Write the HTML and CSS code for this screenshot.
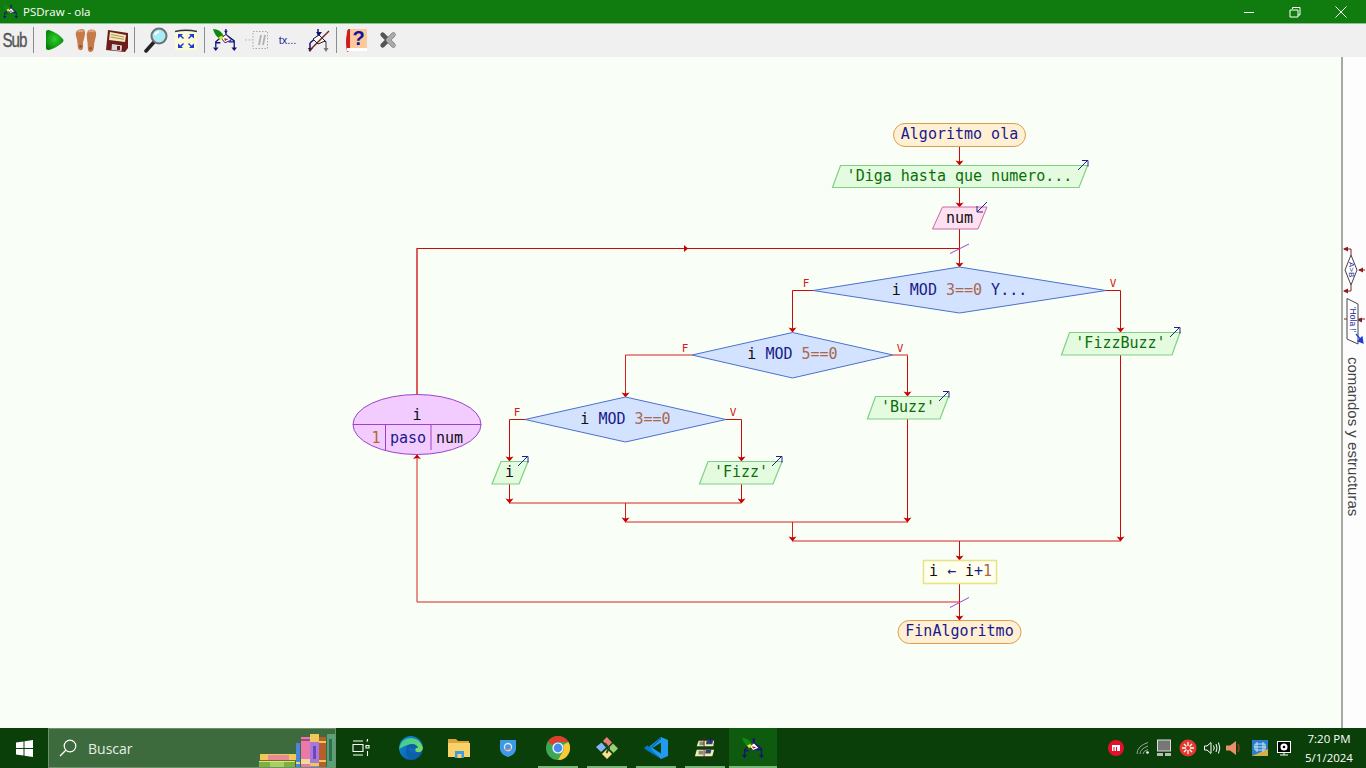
FILE: index.html
```html
<!DOCTYPE html>
<html lang="es">
<head>
<meta charset="utf-8">
<title>PSDraw - ola</title>
<link rel="stylesheet" href="styles.css">
</head>
<body>
<svg class="defs" width="0" height="0" aria-hidden="true">
  <defs>
    <path id="ah" d="M-4 -4.500 L0 -3.500 L4 -4.500 L0 0.500Z"/>
    <radialGradient id="playg" cx="0.5" cy="0.45" r="0.65"><stop offset="0" stop-color="#2fd02f"/><stop offset="1" stop-color="#007a00"/></radialGradient>
    <linearGradient id="edge1" x1="0" y1="0" x2="1" y2="1"><stop offset="0" stop-color="#0d8fd8"/><stop offset="1" stop-color="#0b4f9e"/></linearGradient>
    <linearGradient id="edge2" x1="0" y1="0" x2="1" y2="1"><stop offset="0" stop-color="#36c8a0"/><stop offset="1" stop-color="#7fdc5c"/></linearGradient>
    <symbol id="psd" viewBox="0 0 26 26">
      <path d="M14 1 V7 M3 21 V15 L10 9 M14 7 L23 14 V22 M3 16 H8 M17 15 H23" stroke="#12127c" stroke-width="1.400" fill="none"/>
      <path d="M9 11 L14 7 L20 13 L13 16Z" fill="#fff" stroke="#12127c"/>
      <path d="M12 11 L17 12 L13 14Z" fill="#c41e1e"/>
      <path d="M0 1 Q8 1 12 9 L8 12 Q2 9 0 1Z" fill="#0c8a14"/>
      <path d="M6 10 L10 8 L11 12 L8 13Z" fill="#f2e01c"/>
      <path d="M0 21 L3 25 L6 21Z M20 21 L23 25 L26 21Z M12 3 L14 6 L16 3Z" fill="#12127c"/>
    </symbol>
  </defs>
</svg>

<header class="titlebar">
  <div class="title-left">
    <svg class="title-ico" width="15" height="15"><use href="#psd"/></svg>
    <span class="title-text">PSDraw - ola</span>
  </div>
  <div class="win-ctrls">
    <button class="win-btn"><svg width="12" height="12"><path d="M1 6.500H11" stroke="#fff"/></svg></button>
    <button class="win-btn"><svg width="12" height="12"><path d="M3.500 2.500V1H11V8.500H9M1 3.500H9V10.500H1Z" fill="none" stroke="#fff" transform="translate(0 .5)"/></svg></button>
    <button class="win-btn"><svg width="12" height="12"><path d="M.5 .5L11.500 11.500M11.500 .5L.5 11.500" stroke="#fff"/></svg></button>
  </div>
</header>

<nav class="toolbar">
  <div class="tool tool-sub"><span class="sub-text">Sub</span></div>
  <i class="sep"></i>
  <div class="tool"><svg class="ic-play" width="20" height="22" viewBox="2 1 20 22"><path d="M4 4 Q4 1.500 7 2 Q16 5 21 11 Q22 12.500 21 14 Q16 19 7 22 Q4 22.500 4 20Z" fill="url(#playg)"/></svg></div>
  <div class="tool"><svg width="24" height="26" viewBox="0 0 26 28"><path d="M3 4 Q8 1 11 3 Q13 6 11 12 Q9 17 10 21 Q10 25 7 25 Q4 25 4 20 Q4 14 2 9 Q1.500 6 3 4Z" fill="#c67a4a"/><path d="M15 4 Q19 1 23 4 Q25 7 23 13 Q21.500 18 21.500 22 Q21 27 17.500 27 Q15 27 15 23 Q15 17 14 12 Q13 7 15 4Z" fill="#c67a4a"/><circle cx="7" cy="21" r="1.500" fill="#96502a"/><circle cx="18" cy="23" r="1.500" fill="#96502a"/><path d="M4 5 Q8 3 10 5" stroke="#dfa67c" stroke-width="2" fill="none"/><path d="M16 5 Q19 3 22 5" stroke="#dfa67c" stroke-width="2" fill="none"/></svg></div>
  <div class="tool"><svg width="24" height="24" viewBox="0 0 24 24"><path d="M3 2 L23 5 V20 L20 24 L1 22Z" fill="#6e1c1c"/><path d="M5 4 L21 7 L20 14 L4 12Z" fill="#f4e9b8"/><path d="M6 6.500 L19 9 M5.500 9 L19 11.300" stroke="#a89860"/><path d="M7 16 L17 17.500 L16.500 23 L6.500 22Z" fill="#d8d8d8"/><path d="M12 18 H15 V22 H12Z" fill="#6e1c1c"/></svg></div>
  <i class="sep"></i>
  <div class="tool"><svg width="24" height="26" viewBox="0 0 24 26"><path d="M10 15 L2 24" stroke="#222" stroke-width="3.500" stroke-linecap="round"/><circle cx="15" cy="9" r="7.500" fill="#a8ecf6" stroke="#707070" stroke-width="2"/><path d="M11 8 Q12 5 15 5" stroke="#fff" stroke-width="2" fill="none"/></svg></div>
  <div class="tool"><svg class="ic-left" width="22" height="22" viewBox="0 0 22 22"><rect y="3" width="22" height="18" fill="#fbfbd8"/><path d="M0 2.500 Q11 0 22 2.500" stroke="#333" stroke-width="1.500" fill="none"/><path d="M3 5 H8 L6.500 6.500 L9 9 L8 10 L5.500 7.500 L3 9.500Z M19 5 H14 L15.500 6.500 L13 9 L14 10 L16.500 7.500 L19 9.500Z M3 19 H8 L6.500 17.500 L9 15 L8 14 L5.500 16.500 L3 14.500Z M19 19 H14 L15.500 17.500 L13 15 L14 14 L16.500 16.500 L19 14.500Z" fill="#1c3cd4"/></svg></div>
  <i class="sep"></i>
  <div class="tool"><svg class="ic-left" width="24" height="24"><use href="#psd"/></svg></div>
  <div class="tool"><svg width="24" height="20" viewBox="0 0 24 20"><path d="M8 1.500 H22.500 V18.500 H8Z" fill="none" stroke="#aaa" stroke-dasharray="1.500 1.500"/><path d="M0 10 H8" stroke="#bbb" stroke-dasharray="2 1.500"/><path d="M14 15 L16 5 M18 15 L20 5" stroke="#b0b0b0" stroke-width="1.800"/></svg></div>
  <div class="tool"><span class="tx">tx...</span></div>
  <div class="tool"><svg width="24" height="24" viewBox="0 0 24 24"><path d="M11 1 V7 M3 15 L11 8 L19 14 M3 15 V23" stroke="#12127c" stroke-width="1.500" fill="none"/><path d="M19 14 V22" stroke="#777" stroke-width="1.500"/><path d="M6 11 L12 7 L18 13 L11 16Z" fill="#fff" stroke="#222"/><path d="M9 4 L12 8 L15 4Z M1 20 L3 24 L6 20Z" fill="#12127c"/><path d="M16.500 20 L19 24 L21.500 20Z" fill="#777"/><path d="M2 23 L22 3" stroke="#7a2020" stroke-width="1.500"/></svg></div>
  <i class="sep"></i>
  <div class="tool"><svg class="ic-left" width="22" height="24" viewBox="0 0 22 24"><path d="M3 1 H21 V20 H4 Q0 20 1 23 H3 L1 24 Q-1 14 1 5 Q1 1 3 1Z" fill="#cf1d1d"/><rect x="4" y="1" width="17" height="19" fill="#fdc99a"/><rect x="1" y="20" width="20" height="3" fill="#fff"/><text class="q" x="12.500" y="17">?</text></svg></div>
  <div class="tool"><svg class="ic-left" width="18" height="18" viewBox="0 0 20 20"><path d="M4 4 L16 16 M16 4 L4 16" stroke="#555" stroke-width="5" stroke-linecap="round"/><path d="M10 10 L16 16 M10 10 L16 4" stroke="#aaa" stroke-width="4.500" stroke-linecap="round"/></svg></div>
</nav>

<main class="workspace">
  <svg class="canvas" viewBox="0 57 1341 671" width="1341" height="671">
    <g class="ln">
      <path d="M959.500 146V165M959.500 188V207M959.500 229V267M959.500 583V620"/>
      <path d="M417 248.500H959.500"/>
      <path d="M813 290.500H792.500V332"/>
      <path d="M1106 290.500H1120.500V331"/>
      <path d="M1120.500 355V541"/>
      <path d="M741.500 419.500V461M741.500 484V503M509.500 419.500V461M509.500 484V503M525 419.500H509.500M726 419.500H741.500"/>
      <path d="M907.500 355.500V396M907.500 419V522"/>
      <path d="M959.500 541V560"/>
    </g>
    <path class="ln-thick" d="M417 395V248"/>
    <g class="ln-soft">
      <path d="M692 355H625.500V397"/>
      <path d="M893 355H908"/>
      <path d="M509 503H741M625.500 503V522"/>
      <path d="M625 522H908M792.500 522V541"/>
      <path d="M792 541H1120.500"/>
      <path d="M959.500 602H417V455"/>
    </g>
    <g class="ah">
      <use href="#ah" x="959.500" y="165"/><use href="#ah" x="959.500" y="207"/><use href="#ah" x="959.500" y="267"/>
      <use href="#ah" x="792.500" y="332"/><use href="#ah" x="1120.500" y="332"/><use href="#ah" x="625.500" y="397"/>
      <use href="#ah" x="907.500" y="396"/><use href="#ah" x="509.500" y="461"/><use href="#ah" x="741.500" y="461"/>
      <use href="#ah" x="509.500" y="503"/><use href="#ah" x="741.500" y="503"/><use href="#ah" x="625.500" y="522"/>
      <use href="#ah" x="907.500" y="522"/><use href="#ah" x="792.500" y="541"/><use href="#ah" x="1120.500" y="541"/>
      <use href="#ah" x="959.500" y="560"/><use href="#ah" x="959.500" y="620"/>
      <path d="M417 454.500 L413 459 L417 458 L421 459Z"/>
      <path d="M688 248.500 L684 245 V252Z"/>
    </g>
    <path class="slash" d="M950 253.500L969 244M950 607.500L969 597.500"/>

    <rect class="term" x="893.500" y="123.500" width="132" height="23" rx="11.500"/>
    <path class="out" d="M840.500 165.500H1087.500L1079 187.500H832.500Z"/>
    <path class="inp" d="M942.500 207H987L978 229H932.500Z"/>
    <path class="dec" d="M813 290.500L959.500 267L1106 290.500L959.500 313Z"/>
    <path class="dec" d="M692 355L792.500 332.500L893 355L792.500 378Z"/>
    <path class="dec" d="M525 419.500L625.500 397L726 419.500L625.500 442Z"/>
    <path class="out" d="M1069.500 332.500H1180L1172 355H1061.500Z"/>
    <path class="out" d="M875.500 396.500H948.500L940 419H867.500Z"/>
    <path class="out" d="M501 461.500H528L519 484H492Z"/>
    <path class="out" d="M708 461.500H782L773 484H699.500Z"/>
    <rect class="asg" x="923.500" y="560.500" width="73" height="23"/>
    <rect class="term" x="898" y="620.500" width="123" height="23" rx="11.500"/>
    <ellipse class="loop" cx="417" cy="424.500" rx="64" ry="30"/>
    <path class="loop-l" d="M353 424.500H481M385.500 424.500V450M431 424.500V450"/>

    <g class="io">
      <path d="M1078 170L1088 160M1082 160.500H1088V166.500"/>
      <path d="M987 202L977 212M977 206V212H983"/>
      <path d="M1170 337L1180 327M1174 327.500H1180V333.500"/>
      <path d="M939 401L949 391M943 391.500H949V397.500"/>
      <path d="M518 466L528 456M522 456.500H528V462.500"/>
      <path d="M772 466L782 456M776 456.500H782V462.500"/>
    </g>

    <g class="lbl">
      <text x="806" y="287">F</text><text x="1113" y="287">V</text>
      <text x="685" y="352">F</text><text x="900" y="352">V</text>
      <text x="517" y="416">F</text><text x="733" y="416">V</text>
    </g>

    <g class="fc">
      <text class="navy" x="959.500" y="139">Algoritmo ola</text>
      <text class="green" x="959.500" y="181">'Diga hasta que numero...</text>
      <text class="black" x="959.500" y="223">num</text>
      <text x="959.500" y="295"><tspan class="black">i</tspan> <tspan class="navy">MOD</tspan> <tspan class="brown">3==0</tspan> <tspan class="navy">Y...</tspan></text>
      <text x="792.500" y="359"><tspan class="black">i</tspan> <tspan class="navy">MOD</tspan> <tspan class="brown">5==0</tspan></text>
      <text x="625.500" y="424"><tspan class="black">i</tspan> <tspan class="navy">MOD</tspan> <tspan class="brown">3==0</tspan></text>
      <text class="green" x="1120.500" y="348">'FizzBuzz'</text>
      <text class="green" x="908" y="412">'Buzz'</text>
      <text class="black" x="509.500" y="477">i</text>
      <text class="green" x="741" y="477">'Fizz'</text>
      <text x="960.500" y="576"><tspan class="black">i</tspan> <tspan class="navy">←</tspan> <tspan class="black">i</tspan><tspan class="navy">+</tspan><tspan class="brown">1</tspan></text>
      <text class="navy" x="959.500" y="636">FinAlgoritmo</text>
      <text class="black" x="417" y="420">i</text>
      <text class="orange" x="376" y="443">1</text>
      <text class="navy" x="408" y="443">paso</text>
      <text class="black" x="449.500" y="443">num</text>
    </g>
  </svg>

  <aside class="side">
    <svg class="side-ico" width="23" height="100" viewBox="1343 247 23 100">
      <g class="side-ln">
        <path d="M1351 255V249H1344M1351 285V291H1344M1359 270H1365M1353 319H1365M1344 319H1349"/>
      </g>
      <path class="side-ah" d="M1343 249L1348 246.500V251.500ZM1343 291L1348 288.500V293.500ZM1358 270L1363 267.500V272.500ZM1357 320L1362 317.500V322.500Z"/>
      <path class="side-shape" d="M1351 255L1357 270L1351 285L1345 270Z"/>
      <text class="side-t1" transform="translate(1348.500 262) rotate(90)">A&gt;B</text>
      <path class="side-shape" d="M1347 298.500L1358 304V344L1347 339Z"/>
      <text class="side-t2" transform="translate(1350 307) rotate(90)">'Hola !'</text>
      <path class="side-arrow" d="M1356 334L1362 341M1363 343L1358 341L1362 337Z"/>
    </svg>
    <span class="side-label">comandos y estructuras</span>
  </aside>
</main>

<footer class="taskbar">
  <div class="start"><svg width="17" height="17" viewBox="0 0 17 17"><path d="M0 2.500L7.500 1.400V8H0ZM8.500 1.300L17 0V8H8.500ZM0 9H7.500V15.600L0 14.500ZM8.500 9H17V17L8.500 15.700Z" fill="#fff"/></svg></div>
  <div class="search">
    <svg class="search-ico" width="18" height="18" viewBox="0 0 18 18"><circle cx="11" cy="7" r="5.800" fill="none" stroke="#fff" stroke-width="1.200"/><path d="M6.800 11.200L1 17" stroke="#fff" stroke-width="1.300"/></svg>
    <span class="search-text">Buscar</span>
    <svg class="books" width="76" height="36" viewBox="0 0 76 36">
      <rect x="1" y="23" width="36" height="7" fill="#eec95a"/><rect x="9" y="24" width="21" height="5" fill="#e88a98"/><rect x="1" y="29" width="36" height="1" fill="#8a6a20"/>
      <rect x="0" y="30" width="36" height="6" fill="#7db03c"/><rect x="11" y="31" width="14" height="5" fill="#a7d060"/><rect x="0" y="30" width="36" height="1" fill="#cfe58e"/>
      <rect x="37" y="12" width="4" height="24" fill="#4a86dc"/><rect x="37" y="31" width="4" height="2" fill="#e4d67a"/>
      <rect x="42" y="6" width="9" height="30" fill="#e879a8"/><rect x="42" y="8" width="9" height="2" fill="#a04a80"/><rect x="42" y="28" width="9" height="5" fill="#f0d9a0"/>
      <rect x="51" y="3" width="9" height="33" fill="#a878e0"/><rect x="51" y="3" width="9" height="8" fill="#eec95a"/><rect x="54" y="15" width="3" height="13" fill="#6a4ab0"/><rect x="51" y="32" width="9" height="3" fill="#eec95a"/>
      <rect x="60" y="6" width="7" height="30" fill="#b5602c"/><rect x="60" y="10" width="7" height="2" fill="#eec95a"/><rect x="60" y="29" width="7" height="2" fill="#eec95a"/>
      <rect x="68" y="3" width="8" height="33" fill="#5aa078"/><rect x="70" y="8" width="3" height="22" fill="#2f7048"/>
    </svg>
  </div>

  <div class="apps">
    <div class="app app-task"><svg width="20" height="20" viewBox="0 0 20 20" fill="none" stroke="#fff" stroke-width="1.100"><path d="M2 3H12M2 17H12M2 6.500H12V13.500H2ZM15.500 3H17M16.500 1V3M15 7.500H18V10H15ZM16.500 13V18"/></svg></div>
    <div class="app"><svg width="26" height="26" viewBox="0 0 26 26"><circle cx="13" cy="13" r="12" fill="url(#edge1)"/><path d="M1 14 Q3 3 13 3 Q22 3 25 13 Q24 18 19 17 Q16 16 18 13 Q15 8 9 10 Q4 12 1 14Z" fill="url(#edge2)"/><path d="M8 15 Q8 9 14 9 Q19 9 20 13 H11 Q11 19 18 19 Q21 19 23 18 Q20 24 14 24 Q8 23 8 15Z" fill="#0c5fa8"/></svg></div>
    <div class="app app-task"><svg width="22" height="20" viewBox="0 0 22 20"><path d="M0 1H8L10 3H21V19H0Z" fill="#dca63c"/><rect y="5" width="22" height="14" fill="#fbd269"/><rect x="7" y="13" width="9" height="7" fill="#3f9ce0"/><rect x="9.500" y="16" width="4" height="4" fill="#fbd269"/></svg></div>
    <div class="app app-task"><svg width="16" height="18" viewBox="0 0 16 18"><path d="M0 1H16V10Q16 15 8 18Q0 15 0 10Z" fill="#3f9ae6"/><circle cx="8" cy="8" r="3.500" fill="none" stroke="#d8ecff" stroke-width="1.300"/><path d="M5 10Q8 12 11 9" stroke="#f08050" stroke-width="1.300" fill="none"/></svg></div>
    <div class="app app-on"><svg width="24" height="24" viewBox="0 0 24 24"><circle cx="12" cy="12" r="12" fill="#3ba757"/><path d="M12 0A12 12 0 0 1 22.400 6H12A6 6 0 0 0 6.800 9L1.600 6A12 12 0 0 1 12 0Z" fill="#e33b2e"/><path d="M22.400 6A12 12 0 0 1 12 24L17.200 15A6 6 0 0 0 17.200 9Z" fill="#fcc934"/><circle cx="12" cy="12" r="5.600" fill="#fff"/><circle cx="12" cy="12" r="4.400" fill="#4a8af4"/></svg></div>
    <div class="app app-on"><svg width="24" height="24" viewBox="0 0 24 24"><path d="M11.800 1L17 6.500L13 10.500L8 5Z" fill="#ee7d7a"/><path d="M6.500 6.500L11 11.500L6 16L1 11Z" fill="#83b4fa"/><path d="M18 7.500L23 12.500L18.500 17L13.500 12Z" fill="#9bcf70"/><path d="M12 13L17 18L12 23L7 18Z" fill="#fbe18a"/><path d="M10 7L14 12L11.500 17M14 12H14.800" stroke="#1c4a2c" stroke-width="1.800" fill="none"/></svg></div>
    <div class="app app-on"><svg width="24" height="24" viewBox="0 0 24 24"><path d="M17 1L24 4V20L17 23L5 13V11Z" fill="#1f9cf0"/><path d="M17 6.500V17.500L8.500 12Z" fill="#0a3f0a"/><path d="M17 1L3.500 14.500L0 12L3 9.500L7 12.500L17 3Z" fill="#0065a9"/><path d="M0 12L3.500 9.500L17 23L14 21L3 14.500Z" fill="#007acc"/></svg></div>
    <div class="app app-on"><svg width="24" height="22" viewBox="0 0 24 24"><path d="M5 4H22L21 10H3Z" fill="#eef0b0"/><path d="M3 14H22L20 21H1Z" fill="#eef0b0"/><path d="M6 5H11V9H6ZM5 15H10V19H5Z" fill="#888"/><path d="M14 3H21L20 8H13ZM13 14H19L18 18H12Z" fill="#333e7a"/><path d="M11 0V24" stroke="#6e2020"/><path d="M18 0V6" stroke="#12127c"/></svg></div>
    <div class="app app-active"><svg width="22" height="22"><use href="#psd"/></svg></div>
  </div>

  <div class="tray">
    <svg class="t1" width="16" height="16" viewBox="0 0 16 16"><circle cx="8" cy="8" r="8" fill="#e3102c"/><path d="M4 5H12V11H4Z" fill="#fff"/><path d="M6 7V11M8.500 7V11" stroke="#e3102c"/></svg>
    <svg class="t2" width="14" height="14" viewBox="0 0 14 14" fill="none" stroke="#9aa89a" stroke-width="1"><path d="M1 13Q1 5 12 1.500M4 13Q4 8 12 5M7 13Q7 10 12 8.500"/><circle cx="11.500" cy="11.500" r="1.300" fill="#fff" stroke="none"/></svg>
    <svg class="t3" width="16" height="18" viewBox="0 0 16 18"><rect x="1.500" y="1" width="13" height="11" fill="#777" stroke="#ddd"/><rect x="1" y="14" width="6" height="3" fill="#bbb"/><rect x="9" y="14" width="6" height="3" fill="#bbb"/></svg>
    <svg class="t4" width="18" height="18" viewBox="0 0 18 18"><circle cx="9" cy="9" r="8.500" fill="#e8372c"/><path d="M9 3V7M9 11V15M3 9H7M11 9H15M5 5L7.500 7.500M13 5L10.500 7.500M5 13L7.500 10.500M13 13L10.500 10.500" stroke="#fff" stroke-width="1.300"/></svg>
    <svg class="t5" width="17" height="14" viewBox="0 0 17 14" fill="none" stroke="#fff"><path d="M.5 5H3L7 1.500V12.500L3 9H.5Z"/><path d="M9.500 4.500Q11 7 9.500 9.500M12 3Q14 7 12 11M14.500 1.500Q17 7 14.500 12.500" stroke-width="1"/></svg>
    <svg class="t6" width="16" height="16" viewBox="0 0 16 16"><path d="M0 5.500H4L10 1V15L4 10.500H0Z" fill="#e9906a"/><path d="M12 4Q14 8 12 12" stroke="#8b3a2a" fill="none" stroke-width="1.500"/></svg>
    <svg class="t7" width="16" height="16" viewBox="0 0 16 16"><rect width="16" height="16" fill="#2a80c8"/><path d="M0 16L16 9V16Z" fill="#d8b048"/><path d="M3 4H13V10H3ZM5 2V12M11 2V12M2 7H14" stroke="#e8f4ff" fill="none" stroke-width=".8"/></svg>
    <svg class="t8" width="14" height="15" viewBox="0 0 14 15"><rect x=".5" y=".5" width="13" height="11" fill="#000" stroke="#fff"/><circle cx="7" cy="6" r="3.500" fill="#fff"/><circle cx="7" cy="6" r="1.300" fill="#000"/><path d="M3 14H11M7 12V14" stroke="#fff"/></svg>
    <div class="clock"><span>7:20 PM</span><span>5/1/2024</span></div>
  </div>
</footer>
</body>
</html>
```

FILE: styles.css
```css
* { box-sizing: border-box; }
html, body { margin: 0; padding: 0; }
body {
  width: 1366px; height: 768px; overflow: hidden;
  display: flex; flex-direction: column;
  font-family: "Open Sans", "Liberation Sans", sans-serif;
  background: #fbfffa;
}
.defs { position: absolute; }

/* title bar */
.titlebar {
  height: 24px; flex: none; display: flex; justify-content: space-between;
  background: #107c10; color: #fff; border-bottom: 1px solid #8fbf8f;
}
.title-left { display: flex; align-items: center; padding-left: 3px; gap: 5px; }
.title-ico { flex: none; }
.title-text { font-size: 11.500px; line-height: 23px; color: #fff; }
.win-ctrls { display: flex; padding-right: 2px; }
.win-btn {
  width: 46px; height: 23px; padding: 0; border: 0; background: none;
  display: flex; align-items: center; justify-content: center;
}

/* toolbar */
.toolbar {
  height: 33px; flex: none; display: flex; align-items: flex-start;
  background: #f0f0f0;
}
.tool { width: 31px; height: 32px; display: flex; align-items: center; justify-content: center; flex: none; }
.tool-sub { padding-right: 3px; }
.sub-text {
  display: inline-block; transform: scaleX(.72);
  font-family: "Liberation Sans", sans-serif; font-size: 21px; color: #555;
  letter-spacing: -1.500px; -webkit-text-stroke: .4px #555;
}
.sep { width: 1px; height: 26px; margin: 3px 5px 0 2px; background: #8c8c8c; flex: none; }
.ic-play { margin-left: -1px; }
.ic-left { margin-left: -2px; }
.tx { font-family: "Liberation Sans", sans-serif; font-size: 11px; color: #2a2a9a; }
.q { font: 900 20px "Liberation Sans", sans-serif; fill: #14149a; text-anchor: middle; }

/* workspace */
.workspace { flex: 1; min-height: 0; display: flex; }
.canvas { flex: none; display: block; background: #f9fff6; }
.side {
  flex: 1; background: #fdfdfd; border-left: 2px solid #a8a8a8;
  display: flex; flex-direction: column; align-items: stretch;
  padding-top: 190px; position: relative;
}
.side-ico { flex: none; display: block; position: absolute; left: 0; top: 190px; }
.side-label {
  writing-mode: vertical-rl; font-family: "Liberation Sans", sans-serif;
  font-size: 15px; line-height: 21px; color: #444;
  margin-top: 110px; width: 21px;
}
.side-ln { fill: none; stroke: #8c1c1c; stroke-width: 1; }
.side-ah { fill: #8c1c1c; }
.side-shape { fill: #fff; stroke: #444; stroke-width: 1; }
.side-t1 { font: 8px "Liberation Sans", sans-serif; fill: #2a2aa0; }
.side-t2 { font: 8.500px "Liberation Sans", sans-serif; fill: #2a2aa0; }
.side-arrow { stroke: #1c3ce0; fill: #1c3ce0; stroke-width: 1.200; }

/* flowchart */
.ln { fill: none; stroke: #cc0a0a; stroke-width: 1; }
.ln-thick { fill: none; stroke: #d83434; stroke-width: 1.600; }
.ln-soft { fill: none; stroke: #d92020; stroke-width: 1; }
.ah { fill: #c80000; }
.slash { fill: none; stroke: #9a44d8; stroke-width: 1; }
.term { fill: #fff0d4; stroke: #d8a04c; stroke-width: 1; }
.out { fill: #e4fbdf; stroke: #7fd184; stroke-width: 1.200; }
.inp { fill: #ffe0f0; stroke: #c868a8; stroke-width: 1; }
.dec { fill: #d2e2ff; stroke: #4c70cc; stroke-width: 1; }
.asg { fill: #fffff0; stroke: #e4e48c; stroke-width: 1.600; }
.loop { fill: #f2ccff; stroke: #a040c8; stroke-width: 1; }
.loop-l { fill: none; stroke: #a040c8; stroke-width: 1; }
.io { fill: none; stroke: #22228c; stroke-width: 1; }
.lbl text { font: 11px "DejaVu Sans Mono", monospace; fill: #d02020; text-anchor: middle; }
.fc text { font: 15px "DejaVu Sans Mono", monospace; text-anchor: middle; white-space: pre; }
.navy { fill: #1a1a8c; }
.green { fill: #0a6e0a; }
.black { fill: #101010; }
.brown { fill: #a8684c; }
.orange { fill: #b06a28; }

/* taskbar */
.taskbar {
  height: 40px; flex: none; display: flex; align-items: stretch;
  background: #0a3f0a; color: #fff;
}
.start { width: 48px; display: flex; align-items: center; justify-content: center; flex: none; }
.search {
  width: 288px; flex: none; position: relative; display: flex; align-items: center;
  background: #3e6b3e; border: 1px solid #6d906d; padding-left: 10px; gap: 11px;
}
.search-ico { flex: none; }
.search-text { font-size: 14px; color: #e6efe6; }
.books { position: absolute; right: 0; bottom: 0; }
.apps { display: flex; flex: none; margin-left: 1px; }
.app { width: 49px; display: flex; align-items: center; justify-content: center; position: relative; flex: none; }
.app-task { padding-right: 2px; }
.app-on::after {
  content: ""; position: absolute; left: 5px; right: 4px; bottom: 0; height: 2px; background: #7ab87a;
}
.app-active { background: #0e5a0e; width: 48px; }
.app-active::after {
  content: ""; position: absolute; left: 0; right: 0; bottom: 0; height: 2px; background: #7ab87a;
}
.tray { flex: 1; display: flex; align-items: center; padding-left: 331px; position: relative; }
.tray svg { flex: none; }
.t2 { margin-left: 12px; }
.t3 { margin-left: 6px; }
.t4 { margin-left: 7px; }
.t5 { margin-left: 6.500px; }
.t6 { margin-left: 5.500px; }
.t7 { margin-left: 10px; }
.t8 { margin-left: 9px; }
.clock {
  position: absolute; right: 0; top: 0; width: 74px; height: 40px; padding-bottom: 1px;
  display: flex; flex-direction: column; align-items: center; justify-content: center;
  font-size: 11.500px; line-height: 19px; color: #fff;
}
```
